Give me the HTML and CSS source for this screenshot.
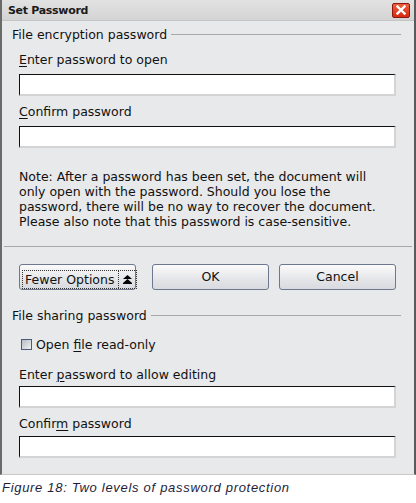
FILE: index.html
```html
<!DOCTYPE html>
<html>
<head>
<meta charset="utf-8">
<link rel="stylesheet" href="styles.css">
</head>
<body>
<div class="window">
  <div class="titlebar">
    <span class="title">Set Password</span>
    <span class="close"><svg width="10" height="10" viewBox="0 0 10 10"><path d="M1.5 1.5 L8.5 8.5 M8.5 1.5 L1.5 8.5" stroke="#fff" stroke-width="2.4" stroke-linecap="square"/></svg></span>
  </div>
  <div class="content">
    <div class="group-title"><span>File encryption password</span><span class="rule"></span></div>
    <div class="field">
      <div class="label"><u>E</u>nter password to open</div>
      <div class="input"></div>
    </div>
    <div class="field">
      <div class="label"><u>C</u>onfirm password</div>
      <div class="input"></div>
    </div>
    <p class="note">Note: After a password has been set, the document will<br>only open with the password. Should you lose the<br>password, there will be no way to recover the document.<br>Please also note that this password is case-sensitive.</p>
  </div>
  <div class="separator"></div>
  <div class="buttons">
    <div class="btn fewer"><span class="focus">Fewer Options <span class="arrow"><svg width="9" height="9" viewBox="0 0 9 9"><path d="M4.5 0 L9 4 L0 4 Z M4.5 4 L9 8 L0 8 Z" fill="#000"/><rect x="0" y="8" width="9" height="1" fill="#000"/></svg></span></span></div>
    <div class="btn">OK</div>
    <div class="btn">Cancel</div>
  </div>
  <div class="content second">
    <div class="group-title"><span>File sharing password</span><span class="rule"></span></div>
    <div class="check-row"><span class="checkbox"></span><span>Open <u>f</u>ile read-only</span></div>
    <div class="field">
      <div class="label edit-label">Enter <u>p</u>assword to allow editing</div>
      <div class="input"></div>
    </div>
    <div class="field">
      <div class="label confirm-label">Confir<u>m</u> password</div>
      <div class="input"></div>
    </div>
  </div>
</div>
<div class="caption">Figure 18: Two levels of password protection</div>
</body>
</html>
```
FILE: styles.css
```css
html, body {
  margin: 0;
  padding: 0;
  background: #ffffff;
}
body {
  width: 416px;
  font-family: "DejaVu Sans", sans-serif;
  font-size: 12.5px;
  color: #111;
}
.window {
  box-sizing: border-box;
  width: 416px;
  height: 475px;
  background: #e8e9ea;
  border-left: 2px solid #6a6a6a;
  border-right: 2px solid #5a5a5a;
  border-bottom: 1px solid #c8c8c8;
  overflow: hidden;
}
.titlebar {
  height: 21px;
  display: flex;
  align-items: center;
  justify-content: space-between;
  padding: 0 4px 0 6px;
  background: linear-gradient(#e2e2e2, #d4d4d4);
  border-bottom: 1px solid #c4c4c4;
  box-sizing: border-box;
}
.title {
  font-weight: bold;
  font-size: 11px;
  letter-spacing: -0.3px;
  color: #1a1a1a;
}
.close {
  width: 18px;
  height: 15px;
  box-sizing: border-box;
  border: 1px solid #8a1a10;
  border-radius: 2px;
  background: linear-gradient(#f0603c, #d62a12);
  display: flex;
  align-items: center;
  justify-content: center;
}
.content {
  padding: 5px 18px 0 10px;
}
.group-title {
  display: flex;
  align-items: center;
  gap: 4px;
  height: 16px;
  font-size: 12.5px;
  margin-right: -5px;
  white-space: nowrap;
}
.rule {
  flex: 1;
  height: 1px;
  background: #a8a8a8;
}
.field {
  margin-left: 7px;
}
.label {
  font-size: 12.5px;
  height: 16px;
  line-height: 16px;
  margin-top: 10px;
  margin-bottom: 6px;
  white-space: nowrap;
}
.field + .field .label {
  margin-top: 8px;
}
.label u, .check-row u {
  text-decoration-thickness: 1px;
  text-underline-offset: 2px;
}
.input {
  height: 22px;
  box-sizing: border-box;
  background: #fff;
  border-style: solid;
  border-width: 1px 2px 2px 1px;
  border-color: #111 #d4d4d4 #d4d4d4 #111;
}
.note {
  margin: 21px 0 0 7px;
  font-size: 12.5px;
  line-height: 15px;
  white-space: nowrap;
}
.separator {
  margin: 17px 2px 0 2px;
  height: 1px;
  background: #a8a8a8;
}
.buttons {
  display: flex;
  padding: 17px 18px 0 17px;
}
.btn {
  box-sizing: border-box;
  width: 117px;
  height: 26px;
  border: 1px solid #6c7890;
  border-radius: 3px;
  background: linear-gradient(#fbfbfb, #e4e5e8 60%, #d8dae0);
  display: flex;
  align-items: center;
  justify-content: center;
  font-size: 12.5px;
  padding-bottom: 2px;
  white-space: nowrap;
}
.btn + .btn {
  margin-left: 16px;
}
.btn + .btn + .btn {
  margin-left: 10px;
}
.fewer {
  justify-content: flex-start;
  padding: 4px 0 0 2px;
}
.focus {
  display: flex;
  align-items: center;
  border: 1px dotted #333;
  padding: 0 4px 0 2px;
  height: 17px;
}
.arrow {
  display: inline-flex;
  margin-left: 4px;
  padding-left: 4px;
  border-left: 1px dotted #333;
  height: 17px;
  align-items: center;
}
.second {
  padding-top: 17px;
}
.check-row {
  display: flex;
  align-items: center;
  gap: 4px;
  margin: 13px 0 0 9px;
  font-size: 12.5px;
  height: 16px;
}
.checkbox {
  width: 11px;
  height: 11px;
  box-sizing: border-box;
  border: 1px solid #4a5a78;
  background: linear-gradient(135deg, #b8bcc4, #eef0f2);
}
.label.edit-label {
  margin-top: 15px;
  margin-bottom: 3px;
}
.label.confirm-label {
  margin-top: 10px;
  margin-bottom: 4px;
}
.caption {
  padding: 5px 0 0 2px;
  font-family: "Liberation Sans", Arial, sans-serif;
  font-style: italic;
  font-size: 13px;
  letter-spacing: 0.7px;
  color: #1e1e3c;
}
```
